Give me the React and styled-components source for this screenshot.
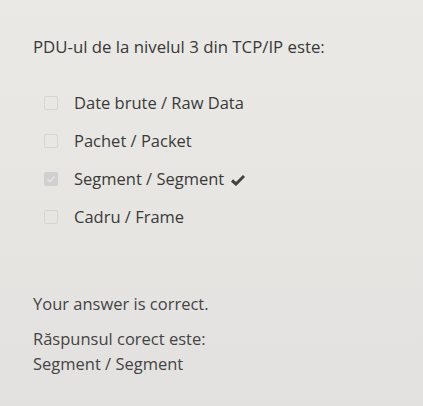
import styled, { createGlobalStyle } from 'styled-components'

const GlobalStyle = createGlobalStyle`
  html, body {
    margin: 0;
    padding: 0;
  }
  body {
    font-family: 'Open Sans', 'Noto Sans', sans-serif;
    background: #e6e5e1;
  }
`

const options = [
  { label: 'Date brute / Raw Data', checked: false },
  { label: 'Pachet / Packet', checked: false },
  { label: 'Segment / Segment', checked: true, correct: true },
  { label: 'Cadru / Frame', checked: false },
]

export default function App() {
  return (
    <>
      <GlobalStyle />
      <Page>
        <Question>PDU-ul de la nivelul 3 din TCP/IP este:</Question>

        <Answers>
          {options.map(o => (
            <Option key={o.label}>
              <Box $checked={o.checked}>
                {o.checked && (
                  <svg width="10" height="10" viewBox="0 0 10 10">
                    <path d="M1.5 5.2 L4 7.5 L8.5 2.5" fill="none" stroke="#e4e4e4" strokeWidth="1.6" />
                  </svg>
                )}
              </Box>
              <Label>{o.label}</Label>
              {o.correct && (
                <Tick viewBox="0 0 14 12" width="14" height="12">
                  <path d="M1 6.5 L5 10 L13 2" fill="none" stroke="#3f433f" strokeWidth="3" strokeLinejoin="miter" />
                </Tick>
              )}
            </Option>
          ))}
        </Answers>

        <Feedback>
          <Outcome>Your answer is correct.</Outcome>
          <RightAnswer>
            Răspunsul corect este:
            <br />
            Segment / Segment
          </RightAnswer>
        </Feedback>
      </Page>
    </>
  )
}

const Page = styled.div`
  box-sizing: border-box;
  min-height: 406px;
  padding: 35px 0 0 33px;
  color: #383838;
  background: linear-gradient(180deg, #eae9e5 0%, #e7e6e2 45%, #e2e1e0 100%);
`

const Question = styled.div`
  font-size: 16.8px;
  line-height: 24px;
`

const Answers = styled.div`
  display: flex;
  flex-direction: column;
  margin-top: 25px;
`

const Option = styled.div`
  display: flex;
  align-items: center;
  height: 38px;
  padding-left: 11px;
`

const Box = styled.span`
  box-sizing: border-box;
  width: 14px;
  height: 14px;
  border: 1px solid ${({ $checked }) => ($checked ? '#cfcfcf' : '#d6d5d2')};
  border-radius: 2px;
  background: ${({ $checked }) => ($checked ? '#d0d0d0' : 'transparent')};
  display: flex;
  align-items: center;
  justify-content: center;
  margin-right: 16px;
`

const Label = styled.span`
  font-size: 16.5px;
  line-height: 24px;
  color: #3a3a3a;
`

const Tick = styled.svg`
  margin-left: 7px;
  margin-top: 2px;
`

const Feedback = styled.div`
  margin-top: 56px;
  font-size: 16.5px;
  color: #444444;
`

const Outcome = styled.div`
  line-height: 24px;
`

const RightAnswer = styled.div`
  margin-top: 10px;
  line-height: 25px;
`
